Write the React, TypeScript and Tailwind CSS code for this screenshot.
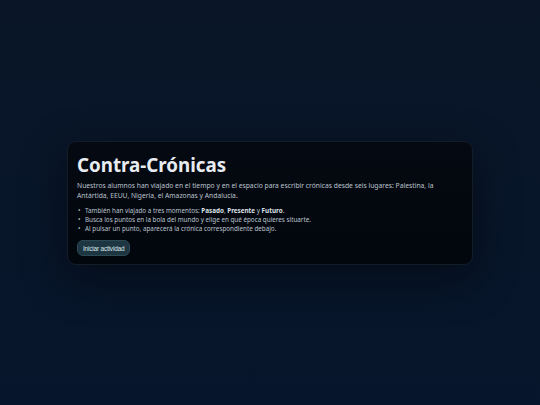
const bullets = [
  <>
    También han viajado a tres momentos: <b className="font-bold text-[#dde2e8]">Pasado</b>,{" "}
    <b className="font-bold text-[#dde2e8]">Presente</b> y <b className="font-bold text-[#dde2e8]">Futuro</b>.
  </>,
  <>Busca los puntos en la bola del mundo y elige en qué época quieres situarte.</>,
  <>Al pulsar un punto, aparecerá la crónica correspondiente debajo.</>,
];

export default function App() {
  return (
    <div className="flex min-h-screen items-center justify-center bg-[linear-gradient(180deg,#0a1628_0%,#06152b_100%)] font-['Noto_Sans',sans-serif]">
      <div className="w-[406px] rounded-[9px] border border-[#141c28] bg-[linear-gradient(180deg,#050a12_0%,#02060d_100%)] px-[9px] pb-[7px] pt-[10px] shadow-[0_12px_45px_rgba(0,0,0,0.45)]">
        <h1 className="text-[18.75px] font-bold leading-[26px] text-[#e8ecf1]">
          Contra-Crónicas
        </h1>
        <p className="mt-[3px] text-[6.75px] leading-[10px] text-[#bcc3cd]">
          Nuestros alumnos han viajado en el tiempo y en el espacio para escribir crónicas desde seis lugares:
          Palestina, la Antártida, EEUU, Nigeria, el Amazonas y Andalucía.
        </p>
        <ul className="mt-[5px] flex flex-col text-[6.3px] leading-[9px] text-[#bcc3cd]">
          {bullets.map((b, i) => (
            <li key={i} className="flex gap-[4px] pl-[1px]">
              <span className="w-[3px]">•</span>
              <span>{b}</span>
            </li>
          ))}
        </ul>
        <button className="mt-[7px] h-[16px] rounded-[6px] border border-[#2b4a55] bg-[#1d3641] px-[5px] font-['Liberation_Sans',Arial,sans-serif] text-[6.5px] tracking-[-0.2px] text-[#dbe6ec]">
          Iniciar actividad
        </button>
      </div>
    </div>
  );
}
